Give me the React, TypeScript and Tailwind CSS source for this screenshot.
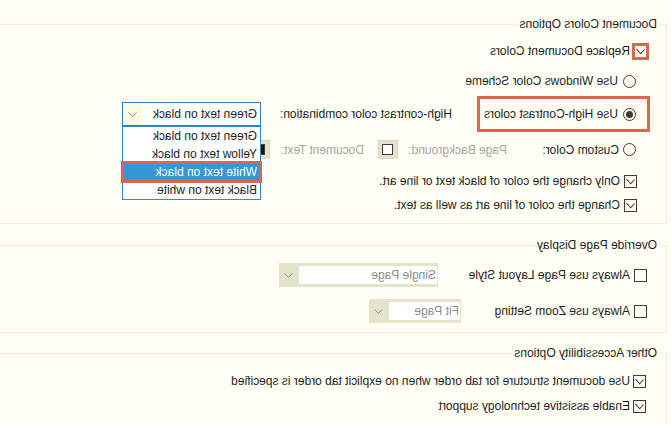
import React from "react";

// The reference is a mirrored (RTL-flipped) dialog page; it is laid out normally and flipped as a whole.

const Check = () => (
  <svg width="11" height="11" viewBox="0 0 11 11" className="block">
    <polyline points="1.5,3.5 5.3,7.8 9.5,3.2" fill="none" stroke="#3d3d33" strokeWidth="1.1" />
  </svg>
);

const Chevron = () => (
  <svg width="9" height="5" viewBox="0 0 9 5" className="block">
    <polyline points="0.5,0.5 4.5,4.3 8.5,0.5" fill="none" stroke="#8b8b7e" strokeWidth="1" />
  </svg>
);

const Checkbox = ({ checked }: { checked?: boolean }) => (
  <span className="flex h-[13px] w-[13px] shrink-0 items-center justify-center border border-[#3d3d33]">
    {checked && <Check />}
  </span>
);

const Radio = ({ checked }: { checked?: boolean }) => (
  <span className="flex h-[13px] w-[13px] shrink-0 items-center justify-center rounded-full border border-[#3d3d33]">
    {checked && <span className="h-[7px] w-[7px] rounded-full bg-[#3d3d33]" />}
  </span>
);

const Group = ({ title, className, children }: { title: string; className?: string; children: React.ReactNode }) => (
  <fieldset className={`ml-[4px] w-[680px] border border-[#efeed9] ${className ?? ""}`}>
    <legend className="ml-[7px] px-[2px] leading-[16px]">{title}</legend>
    {children}
  </fieldset>
);

const DisabledSelect = ({ value, width }: { value: string; width: string }) => (
  <div className={`flex h-[24px] shrink-0 bg-[#e3e4cc] ${width}`}>
    <span className="my-[3px] ml-[1px] flex-1 bg-white pl-[1px] leading-[18px] text-[#8e8e8a]">{value}</span>
    <span className="flex w-[20px] items-center justify-center">
      <Chevron />
    </span>
  </div>
);

const Swatch = ({ fill }: { fill: string }) => (
  <span className="flex h-[19px] w-[20px] shrink-0 items-center justify-center border border-[#d9d9c3] bg-[#e4e4ce]">
    <span className={`h-[11px] w-[11px] border border-[#3d3d33] ${fill}`} />
  </span>
);

const combos = ["Green text on black", "Yellow text on black", "White text on black", "Black text on white"];

export default function App() {
  return (
    <div className="h-[424px] w-[671px] -scale-x-100 overflow-hidden bg-[#fffff5] pt-[16px] font-['Liberation_Sans',Arial,sans-serif] text-[12px] leading-[16px] text-[#1e1e1e]">
      <Group title="Document Colors Options" className="pb-[9px]">
        {/* Replace Document Colors */}
        <div className="mt-[10px] flex h-[18px] items-center pl-[17px]">
          <span className="flex h-[17px] w-[17px] shrink-0 items-center justify-center border-[3px] border-[#dc6550]">
            <Check />
          </span>
          <span className="ml-[2px]">Replace Document Colors</span>
        </div>

        <div className="mt-[12px] flex h-[18px] items-center pl-[30px]">
          <Radio />
          <span className="ml-[5px]">Use Windows Color Scheme</span>
        </div>

        {/* High contrast row */}
        <div className="mt-[6px] flex h-[36px] items-center">
          <div className="ml-[16px] flex h-[36px] w-[173px] shrink-0 items-center border-[3px] border-[#dc6550] pl-[11px]">
            <Radio checked />
            <span className="ml-[5px]">Use High-Contrast colors</span>
          </div>
          <span className="ml-[25px] w-[191px] shrink-0">High-contrast color combination:</span>
          <div className="relative flex h-[24px] w-[139px] shrink-0 border border-[#3a7cb0] bg-white">
            <span className="flex-1 pl-[3px] leading-[22px]">Green text on black</span>
            <span className="flex w-[19px] items-center justify-center bg-[#fbfbe2]">
              <Chevron />
            </span>
            <ul className="absolute left-[-1px] top-[23px] z-10 w-[139px] border border-[#2b8ad6] bg-white">
              {combos.map((c) => (
                <li
                  key={c}
                  className={`h-[18px] pl-[3px] leading-[18px] ${
                    c === "White text on black"
                      ? "bg-[#3497d6] text-white outline-[3px] outline-offset-[-1px] outline-[#dc6550]"
                      : ""
                  }`}
                >
                  {c}
                </li>
              ))}
            </ul>
          </div>
        </div>

        {/* Custom color */}
        <div className="mt-[8px] flex h-[19px] items-center pl-[30px]">
          <Radio />
          <span className="ml-[4px] w-[112px] shrink-0">Custom Color:</span>
          <span className="w-[109px] shrink-0 text-[#a4a4a0]">Page Background:</span>
          <Swatch fill="bg-white" />
          <span className="ml-[14px] w-[94px] shrink-0 text-[#a4a4a0]">Document Text:</span>
          <Swatch fill="bg-[#111111]" />
        </div>

        <div className="mt-[13px] flex h-[18px] items-center pl-[29px]">
          <Checkbox checked />
          <span className="ml-[4px]">Only change the color of black text or line art.</span>
        </div>
        <div className="mt-[6px] flex h-[18px] items-center pl-[29px]">
          <Checkbox checked />
          <span className="ml-[4px]">Change the color of line art as well as text.</span>
        </div>
      </Group>

      <Group title="Override Page Display" className="mt-[13px] pb-[9px]">
        <div className="mt-[10px] flex h-[24px] items-center pl-[19px]">
          <Checkbox />
          <span className="ml-[4px] w-[192px] shrink-0">Always use Page Layout Style</span>
          <DisabledSelect value="Single Page" width="w-[159px]" />
        </div>
        <div className="mt-[12px] flex h-[24px] items-center pl-[19px]">
          <Checkbox />
          <span className="ml-[4px] w-[169px] shrink-0">Always use Zoom Setting</span>
          <DisabledSelect value="Fit Page" width="w-[92px]" />
        </div>
      </Group>

      <Group title="Other Accessibility Options" className="mt-[12px] pb-[9px]">
        <div className="mt-[11px] flex h-[18px] items-center pl-[20px]">
          <Checkbox checked />
          <span className="ml-[3px]">Use document structure for tab order when no explicit tab order is specified</span>
        </div>
        <div className="mt-[7px] flex h-[18px] items-center pl-[20px]">
          <Checkbox checked />
          <span className="ml-[3px]">Enable assistive technology support</span>
        </div>
      </Group>
    </div>
  );
}
